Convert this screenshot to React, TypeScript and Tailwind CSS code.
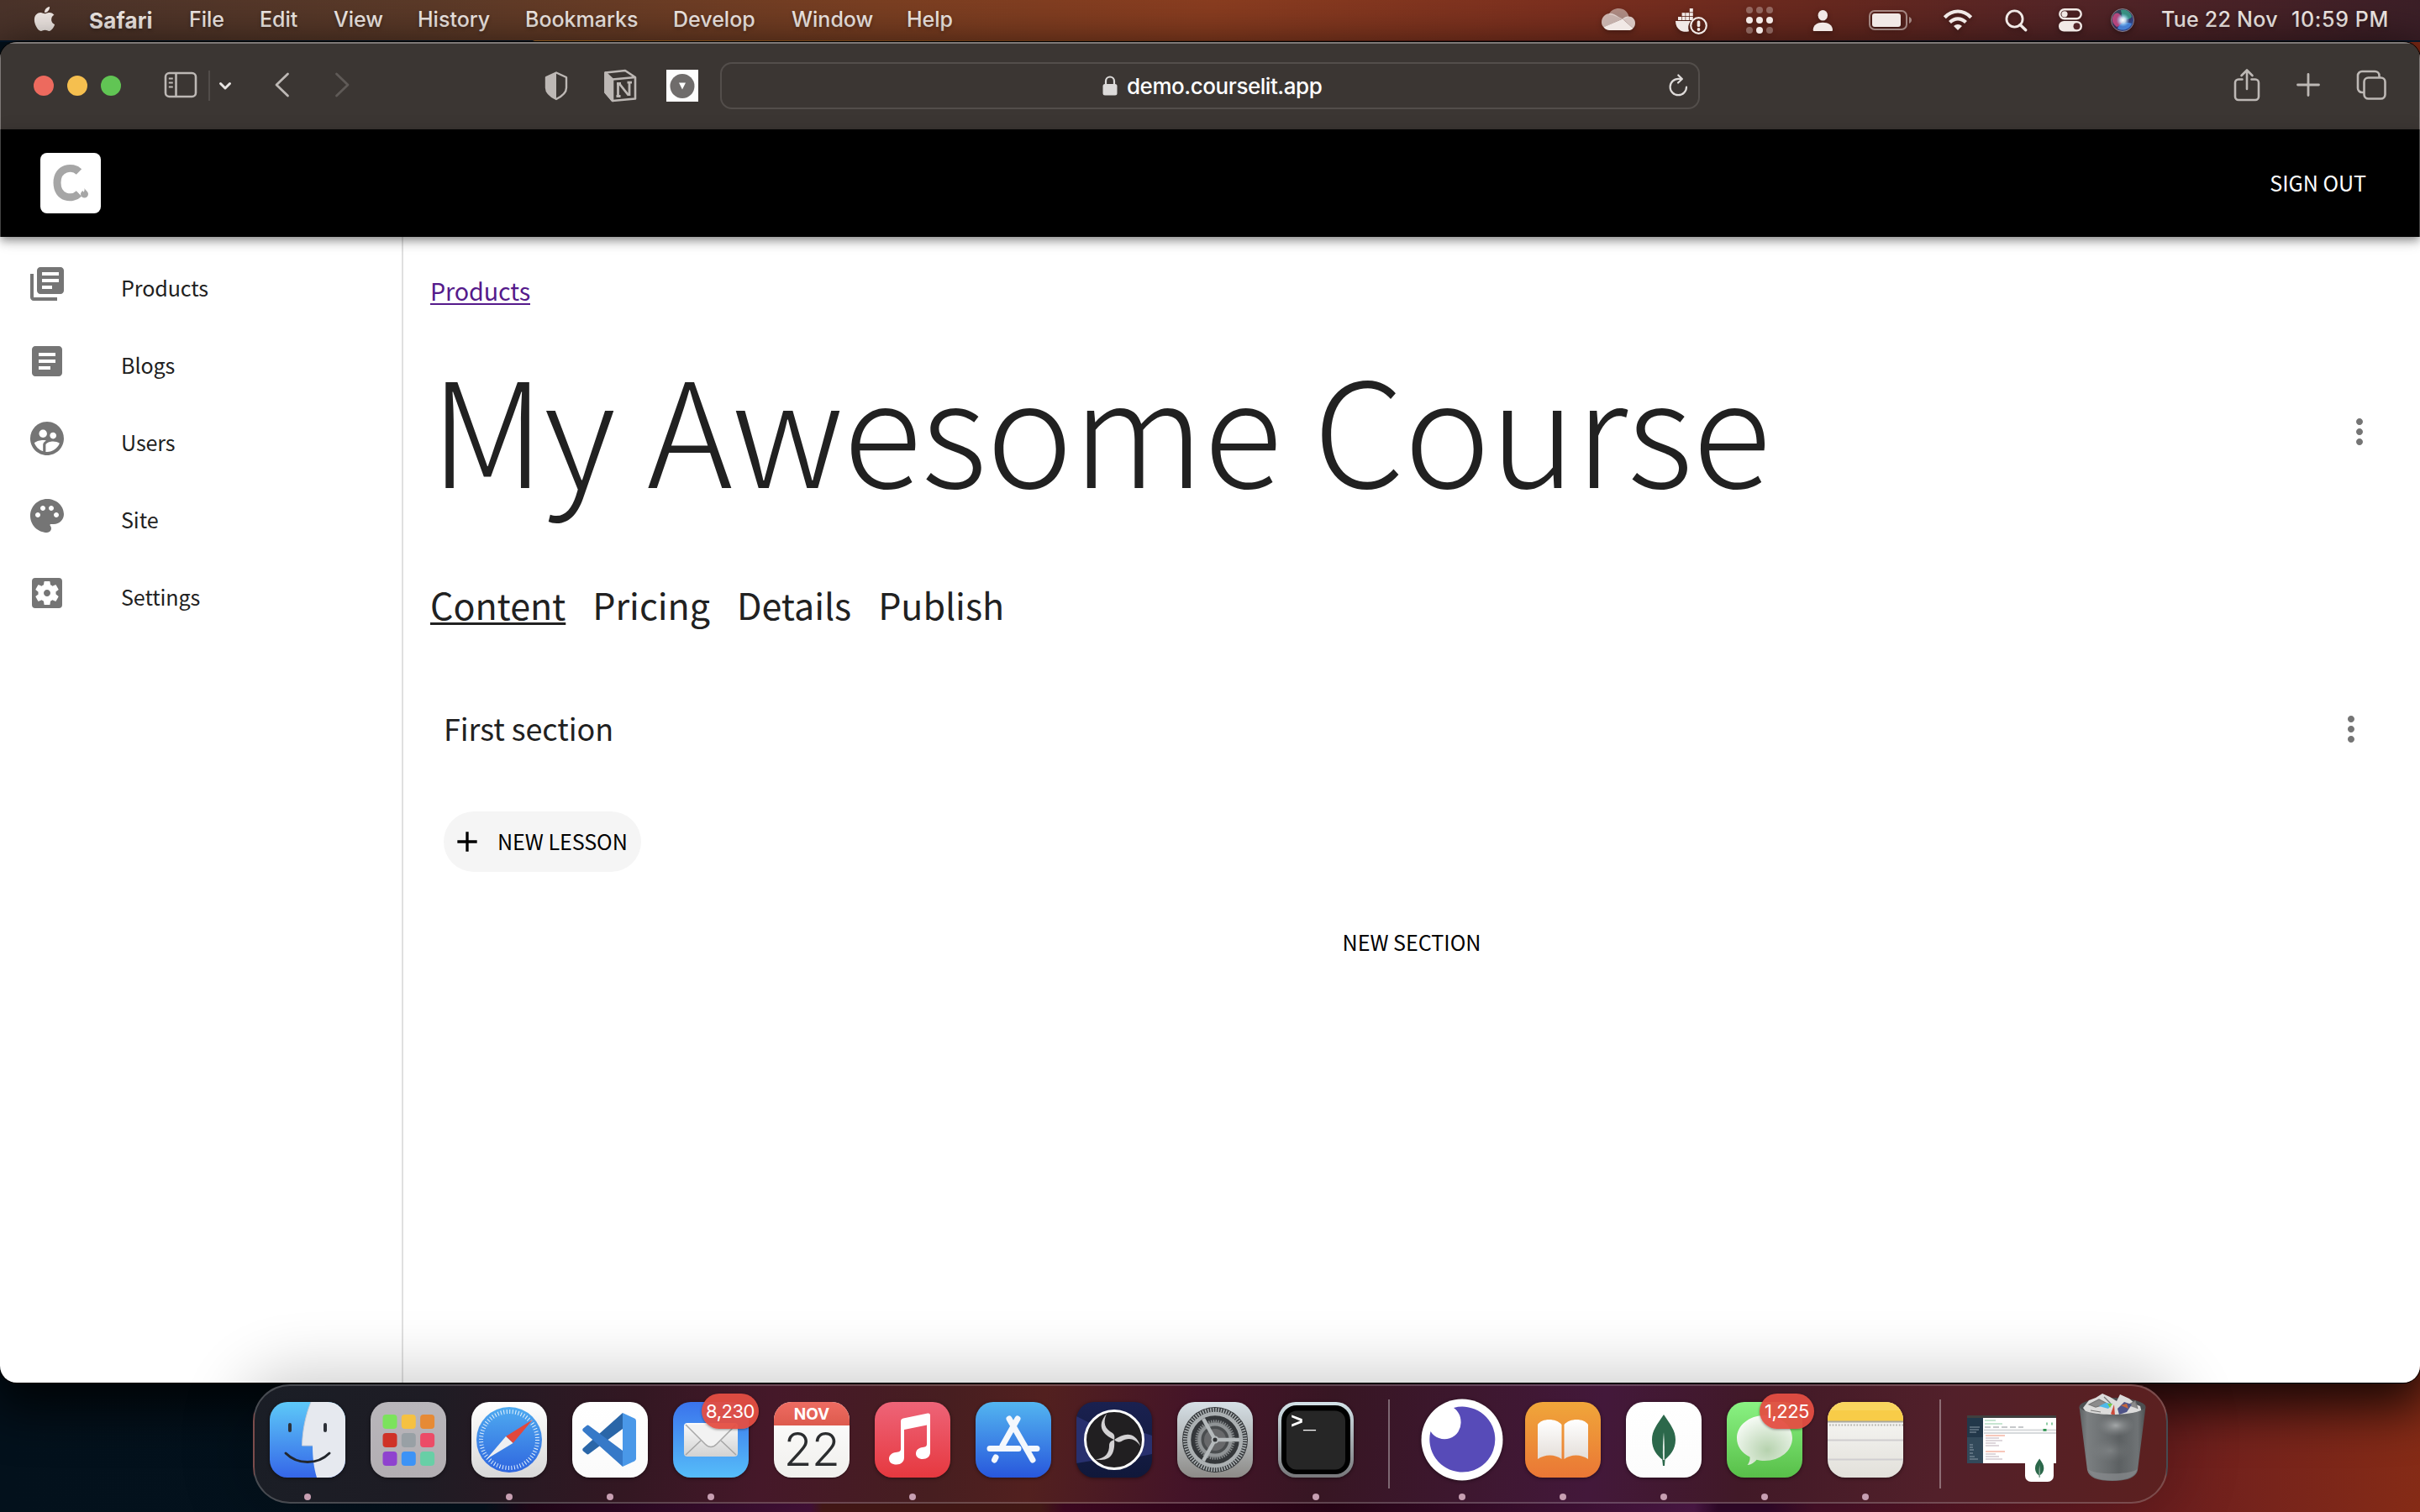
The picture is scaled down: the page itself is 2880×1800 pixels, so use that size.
import React from "react";
import { FaApple } from "react-icons/fa";
import {
  MdAdd,
  MdArticle,
  MdLibraryBooks,
  MdMoreVert,
  MdPalette,
  MdSettingsApplications,
  MdSupervisedUserCircle,
} from "react-icons/md";

const menus = [
  { label: "File", cls: "w-[84px]" },
  { label: "Edit", cls: "w-[88px]" },
  { label: "View", cls: "w-[100px]" },
  { label: "History", cls: "w-[128px]" },
  { label: "Bookmarks", cls: "w-[176px]" },
  { label: "Develop", cls: "w-[141px]" },
  { label: "Window", cls: "w-[137px]" },
  { label: "Help", cls: "w-[80px]" },
];

function StatusIcons() {
  return (
    <div className="flex h-12 items-center drop-shadow-[0_2px_3px_rgba(0,0,0,0.35)]">
      <svg className="h-12 w-10" viewBox="0 0 40 48" fill="#f1e9e6">
        <path opacity=".5" d="M8.500 17C11 12.500 15.500 10 20.500 10c6 0 11 4 12 10l-7 3-12-5z" />
        <path opacity=".72" d="M10 16c4 0 7 2 10 4l5 2.500L2.500 32.500C.5 30.500 0 28.500 0 26.500 0 20.500 4.500 16 10 16z" />
        <path opacity=".82" d="M25 22.500c2-2 4.500-3 7-3 4.500 0 8 3.500 8 8 0 2.500-.8 4.500-2.500 6.200z" />
        <path d="M25 22.500l12.500 11.200C36.200 35.200 34.500 36 32 36H9.500C6.500 36 4 34.700 2.500 32.200z" />
      </svg>
      <svg className="ml-[47px] h-12 w-10" viewBox="0 0 40 48" fill="#f1e9e6">
        <path d="M1 25h18a13 13 0 0 0-2 12.200C14 38 10 38 7 36.500 3 34 1 30 1 25z" />
        <g>
          <rect x="4" y="20" width="4" height="4" />
          <rect x="8.600" y="20" width="4" height="4" />
          <rect x="13.200" y="20" width="4" height="4" />
          <rect x="17.800" y="20" width="4" height="4" />
          <rect x="8.600" y="15.200" width="4" height="4" />
          <rect x="13.200" y="15.200" width="4" height="4" />
          <rect x="17.800" y="15.200" width="4" height="4" />
          <rect x="17.800" y="10" width="4" height="4.400" />
        </g>
        <circle cx="28.500" cy="30.500" r="9.300" fill="none" stroke="#f1e9e6" strokeWidth="2.200" />
        <rect x="26.700" y="24.500" width="3.600" height="7.500" rx="1.500" />
        <circle cx="28.500" cy="35" r="1.900" />
      </svg>
      <svg className="ml-[45px] h-12 w-8" viewBox="0 0 32 48" fill="#f3e9e6">
        <g opacity=".33">
          <circle cx="4" cy="12" r="4" /><circle cx="16" cy="12" r="4" /><circle cx="28" cy="12" r="4" />
          <circle cx="4" cy="36" r="4" /><circle cx="28" cy="36" r="4" />
        </g>
        <circle cx="4" cy="24" r="4" /><circle cx="16" cy="24" r="4" /><circle cx="28" cy="24" r="4" />
        <circle cx="16" cy="36" r="4" />
      </svg>
      <svg className="ml-[47px] h-12 w-6" viewBox="0 0 24 48" fill="#f1e9e6">
        <ellipse cx="12.300" cy="18.300" rx="5.700" ry="6.300" />
        <path d="M.7 35.500C1 30 5.500 26.700 12.200 26.700S23.700 30 24 35.500c0 1-.5 1.500-1.300 1.500H2C1.200 37 .7 36.500.7 35.500z" />
      </svg>
      <svg className="ml-[43px] h-12 w-[52px]" viewBox="0 0 52 48">
        <rect x="1" y="13" width="44" height="22" rx="6" fill="none" stroke="#f1e9e6" strokeOpacity=".5" strokeWidth="2" />
        <rect x="4" y="16" width="34" height="16" rx="3" fill="#f1e9e6" />
        <path d="M48 20c1.800.8 3 2.200 3 4s-1.200 3.200-3 4z" fill="#f1e9e6" fillOpacity=".5" />
      </svg>
      <svg className="ml-9 h-12 w-9" viewBox="0 0 36 48" fill="none" stroke="#f1e9e6" strokeWidth="4.200">
        <path d="M2.300 20.700c9.200-9.600 22.200-9.600 31.400 0" />
        <path d="M8.500 26.500c5.700-5.600 13.300-5.600 19 0" />
        <path d="M18 36l-5-5c3-2.700 7-2.700 10 0z" fill="#f1e9e6" stroke="none" />
      </svg>
      <svg className="ml-[38px] h-12 w-[27px]" viewBox="0 0 27 48" fill="none" stroke="#f1e9e6" strokeWidth="2.800">
        <circle cx="11.500" cy="22.500" r="9.600" />
        <path d="M18.200 29.500l6.500 6.300" strokeWidth="3.400" strokeLinecap="round" />
      </svg>
      <svg className="ml-[37px] h-12 w-7" viewBox="0 0 28 48">
        <rect x="1.300" y="11.300" width="25.400" height="11" rx="5.500" fill="none" stroke="#f1e9e6" strokeWidth="2.400" />
        <circle cx="7" cy="16.800" r="3.600" fill="#f1e9e6" />
        <rect x="0" y="25" width="28" height="12.500" rx="6.200" fill="#f1e9e6" />
        <circle cx="21.500" cy="31.200" r="4" fill="#55262a" />
      </svg>
      <svg className="ml-[34px] h-12 w-7" viewBox="0 0 28 48">
        <defs>
          <linearGradient id="siriBase" x1="0" y1="0" x2="1" y2="1">
            <stop offset="0" stopColor="#2f5a5e" />
            <stop offset=".5" stopColor="#372a55" />
            <stop offset="1" stopColor="#2a5fb5" />
          </linearGradient>
          <radialGradient id="siriGlow">
            <stop offset="0" stopColor="#fff" />
            <stop offset=".4" stopColor="#d5efff" stopOpacity=".85" />
            <stop offset="1" stopColor="#7fd0ff" stopOpacity="0" />
          </radialGradient>
        </defs>
        <circle cx="14" cy="24" r="13.500" fill="url(#siriBase)" stroke="#8b7c86" strokeWidth="1" />
        <path d="M2 21c3-8 9-7 12 2 1 4-3 8-7 9-4-3-6-7-5-11z" fill="#d34a86" opacity=".8" />
        <path d="M12 12c6-2 12 2 13 8-3 4-8 4-11 2z" fill="#3aa68c" opacity=".8" />
        <path d="M8 34c2-6 8-9 17-6-2 6-10 10-17 6z" fill="#4a8fe8" opacity=".8" />
        <circle cx="14.500" cy="24" r="8" fill="url(#siriGlow)" />
      </svg>
    </div>
  );
}

function MenuBar() {
  return (
    <div className="flex h-12 shrink-0 items-center bg-[linear-gradient(100deg,#4a332a_0%,#5c3a28_18%,#7a3f22_36%,#8a3d20_50%,#7d301f_64%,#66281f_76%,#552527_85%,#3b1f27_100%)] pl-[39px] text-[25px] font-medium text-[#f3ebe7] [text-shadow:0_2px_4px_rgba(0,0,0,0.3)]">
      <FaApple className="mb-1 h-[33px] w-[28px]" />
      <span className="ml-[39px] w-[118px] text-[26px] font-bold tracking-[0.15px]">Safari</span>
      {menus.map((m) => (
        <span key={m.label} className={`${m.cls} pl-px whitespace-nowrap`}>
          {m.label}
        </span>
      ))}
      <div className="ml-auto flex items-center">
        <StatusIcons />
        <span className="ml-[32px] w-[155px] tracking-[0.25px] whitespace-nowrap">Tue 22 Nov</span>
        <span className="w-[153px] tracking-[0.65px] whitespace-nowrap">10:59 PM</span>
      </div>
    </div>
  );
}

function BrowserToolbar() {
  return (
    <div className="flex h-[104px] shrink-0 items-center border-t-2 border-[#7e7977] bg-[#3b3633] pb-[2px] pl-[40px] text-[#bdb8b5] shadow-[inset_1px_0_0_#7e7977,inset_-1px_0_0_#7e7977]">
      <div className="flex gap-4">
        <span className="h-6 w-6 rounded-full bg-[#ed6a5e]" />
        <span className="h-6 w-6 rounded-full bg-[#f5bf4f]" />
        <span className="h-6 w-6 rounded-full bg-[#61c554]" />
      </div>
      <svg className="mb-[2px] ml-[51px] h-8 w-10" viewBox="0 0 40 32" fill="none" stroke="currentColor" strokeWidth="2.600">
        <rect x="2" y="2" width="36" height="28" rx="4.500" />
        <path d="M14.500 2v28" />
        <path d="M5.800 8.500h5M5.800 13.500h5M5.800 18.500h5" strokeWidth="2" />
      </svg>
      <span className="ml-[13px] h-9 w-[2px] bg-[#524d4a]" />
      <svg className="ml-[10px] h-4 w-4" viewBox="0 0 16 16" fill="none" stroke="#e8e5e3" strokeWidth="3" strokeLinecap="round" strokeLinejoin="round">
        <path d="M2.500 5.500L8 11l5.500-5.500" />
      </svg>
      <svg className="mb-[2px] ml-[50px] h-8 w-5" viewBox="0 0 20 32" fill="none" stroke="currentColor" strokeWidth="2.800" strokeLinecap="round" strokeLinejoin="round">
        <path d="M16.500 3L3 16l13.500 13" />
      </svg>
      <svg className="mb-[2px] ml-[51px] h-8 w-5" viewBox="0 0 20 32" fill="none" stroke="#5f5a57" strokeWidth="2.800" strokeLinecap="round" strokeLinejoin="round">
        <path d="M3.500 3L17 16 3.500 29" />
      </svg>
      <svg className="ml-[230px] h-9 w-[30px]" viewBox="0 0 30 36">
        <path d="M15 2.500L27 8v12.500c0 6-5 10-12 13.500C8 30.500 3 26.500 3 20.500V8z" fill="none" stroke="currentColor" strokeWidth="2.400" strokeLinejoin="round" />
        <path d="M15 2.500V34C8 30.500 3 26.500 3 20.500V8z" fill="currentColor" />
      </svg>
      <svg className="ml-[41px] h-10 w-10" viewBox="0 0 40 40" fill="none" stroke="currentColor" strokeWidth="2.600" strokeLinejoin="round">
        <path d="M2.500 4.500L26 2l12 8v25.500L11 38 2.500 28z" />
        <path d="M2.500 4.500L11 12.500V38L2.500 28z" fill="currentColor" />
        <path d="M11 12.500l27-2.500" />
        <path d="M16 17.500h5M17.500 17.500v14.500M15.500 32.500h5M19 17.500l11 14M31 16v16M28.500 16.200h5.500" strokeWidth="2.800" />
      </svg>
      <svg className="ml-[35px] h-[38px] w-[38px]" viewBox="0 0 38 38">
        <rect width="38" height="38" fill="#fdfdfd" />
        <circle cx="19" cy="19.500" r="14.500" fill="#6f6c6b" />
        <path d="M15 15.500h8l-4 8z" fill="#fff" />
      </svg>
      <div className="ml-[26px] flex h-[56px] w-[1166px] items-center rounded-[14px] border-2 border-[#534e4b] pr-3 text-white">
        <svg className="ml-[452px] h-6 w-5" viewBox="0 0 20 24">
          <path d="M5 11V6.500a5 5 0 0 1 10 0V11" fill="none" stroke="#dcdad9" strokeWidth="2.200" />
          <rect x="1.500" y="10" width="17" height="13.500" rx="2.500" fill="#dcdad9" />
        </svg>
        <span className="ml-[10px] text-[26px] font-medium tracking-[-0.45px] whitespace-nowrap">demo.courselit.app</span>
        <svg className="ml-auto h-7 w-6" viewBox="0 0 24 28" fill="none" stroke="#dedbd9" strokeWidth="2.200" strokeLinecap="round" strokeLinejoin="round">
          <path d="M22 15.500a9.700 9.700 0 1 1-9.700-9.700h4" />
          <path d="M12.300 1.500l4.500 4.500-4.700 4.500" />
        </svg>
      </div>
      <svg className="mb-[3px] ml-[635px] h-10 w-8" viewBox="0 0 32 40" fill="none" stroke="currentColor" strokeWidth="2.600" strokeLinecap="round" strokeLinejoin="round">
        <path d="M10.500 13.500H6a4 4 0 0 0-4 4V34a4 4 0 0 0 4 4h20a4 4 0 0 0 4-4V17.500a4 4 0 0 0-4-4h-4.500" />
        <path d="M16 25V3M9.500 9L16 2.500 22.500 9" />
      </svg>
      <svg className="mb-[2px] ml-[43px] h-7 w-7" viewBox="0 0 28 28" fill="none" stroke="currentColor" strokeWidth="2.800" strokeLinecap="round">
        <path d="M14 1.500v25M1.500 14h25" />
      </svg>
      <svg className="mb-[2px] ml-[43px] h-9 w-9" viewBox="0 0 36 36" fill="none" stroke="currentColor" strokeWidth="2.600">
        <rect x="9.500" y="9.500" width="25" height="25" rx="5" />
        <path d="M9.500 27H7a5 5 0 0 1-5-5V7a5 5 0 0 1 5-5h15.500a5 5 0 0 1 5 5v2.500" />
      </svg>
    </div>
  );
}

const nav = [
  { label: "Products", Icon: MdLibraryBooks },
  { label: "Blogs", Icon: MdArticle },
  { label: "Users", Icon: MdSupervisedUserCircle },
  { label: "Site", Icon: MdPalette },
  { label: "Settings", Icon: MdSettingsApplications },
];

function CoursePage() {
  return (
    <div className="flex min-h-0 flex-1 flex-col bg-white font-['Noto_Sans_CJK_SC','Noto_Sans',sans-serif] text-[#212121]">
      <header className="z-10 flex h-32 shrink-0 items-center justify-between border-x border-[#444] bg-black pr-[63px] pl-[47px] shadow-[0_4px_8px_-2px_rgba(0,0,0,0.3),0_8px_10px_rgba(0,0,0,0.16),0_2px_20px_rgba(0,0,0,0.12)]">
        <svg className="h-[72px] w-[72px] rounded-[8px] bg-white" viewBox="0 0 72 72">
          <path d="M46 22.500C38.500 15 20 17 20 35.500c0 19 18.500 20.500 26 13" fill="none" stroke="#a6a6a6" strokeWidth="9" />
          <path d="M52.500 42c1.500 3 4.500 4 4.500 7a4.500 4.500 0 0 1-9 0c0-2 1.500-2.500 2-4 1 .6 1.300 1.200 1.600 1.800.9-1.400 1.200-3 .9-4.800z" fill="#a6a6a6" />
        </svg>
        <span className="text-[25.1px] tracking-[-0.05px] whitespace-nowrap text-white">SIGN OUT</span>
      </header>
      <div className="flex min-h-0 flex-1">
        <nav className="w-[480px] shrink-0 border-r-2 border-[#e0e0e0] pt-[14px]">
          {nav.map(({ label, Icon }) => (
            <div key={label} className="flex h-[92px] items-center pl-8">
              <Icon className="mb-2 h-12 w-12 text-[#757575]" />
              <span className="mt-px ml-[64px] text-[25.1px] tracking-[-0.1px]">{label}</span>
            </div>
          ))}
        </nav>
        <main className="flex min-w-0 flex-1 flex-col pt-[44px] pl-[32px]">
          <a className="h-10 self-start text-[28.7px] leading-10 tracking-[-0.1px] text-[#551a8b] underline decoration-2 underline-offset-[3px]">
            Products
          </a>
          <div className="mt-[29px] flex h-[224px] items-center justify-between pr-[48px]">
            <h1 className="mb-[2px] text-[173px] leading-[224px] font-light tracking-[-0.4px] whitespace-nowrap">My Awesome Course</h1>
            <MdMoreVert className="mt-[14px] h-12 w-12 text-[#757575]" />
          </div>
          <div className="mt-[68px] flex h-16 gap-8 text-[43px] leading-[64px] tracking-[-0.04px]">
            <span className="underline decoration-[3px] underline-offset-[3px]">Content</span>
            <span>Pricing</span>
            <span>Details</span>
            <span>Publish</span>
          </div>
          <div className="mt-[83px] flex h-16 items-center justify-between pr-[58px] pl-4">
            <span className="text-[35.900px] leading-[64px] tracking-[-0.05px]">First section</span>
            <MdMoreVert className="mt-1 h-12 w-12 text-[#757575]" />
          </div>
          <button className="mt-[68px] ml-4 flex h-[72px] w-[235px] items-center rounded-full bg-[#f5f5f5] pl-2 text-black">
            <MdAdd className="h-10 w-10" />
            <span className="ml-4 text-[25.1px] tracking-[-0.05px] whitespace-nowrap">NEW LESSON</span>
          </button>
          <div className="mt-[51px] -ml-8 text-center text-[25.1px] leading-[64px] text-black">NEW SECTION</div>
        </main>
      </div>
    </div>
  );
}

function Leaf() {
  return (
    <g>
      <path d="M45 15c8 12 14 19 14 30 0 12-7 19-12.500 23.500L46 76h-2l-.8-7.500C37.500 64 31 57 31 45c0-11 6-18 14-30z" fill="#2c684b" />
      <path d="M45 36c1 12 1 22 .8 33h-1.600C43.500 58 44 46 45 36z" fill="#dfe9e3" />
    </g>
  );
}

function Tile({ id, from, to }: { id: string; from: string; to: string }) {
  return (
    <>
      <defs>
        <linearGradient id={id} x1="0" y1="0" x2="0" y2="1">
          <stop offset="0" stopColor={from} />
          <stop offset="1" stopColor={to} />
        </linearGradient>
        <clipPath id={`${id}-clip`}>
          <rect width="90" height="90" rx="21" />
        </clipPath>
      </defs>
      <rect width="90" height="90" rx="21" fill={`url(#${id})`} />
    </>
  );
}

function FinderIcon() {
  return (
    <>
      <Tile id="finder" from="#5dc9f8" to="#3566e8" />
      <g clipPath="url(#finder-clip)">
        <path d="M49 0C43 15 39 33 38.500 52H51c0 14 1.500 26 5 38h34V0z" fill="#e6e9ef" />
        <path d="M49 0C43 15 39 33 38.500 52H51" fill="none" stroke="#c8ccd5" strokeWidth="1" />
      </g>
      <path d="M24 27v7M66 27v7" stroke="#2d3138" strokeWidth="4" strokeLinecap="round" />
      <path d="M19 61c14 14 38 14 52 0" fill="none" stroke="#22262c" strokeWidth="3" strokeLinecap="round" />
    </>
  );
}

const padColors = ["#7be35c", "#f5c142", "#e68a35", "#cf3226", "#98a0a5", "#ec4c67", "#8f42cf", "#3d93f6", "#68cfa6"];

function LaunchpadIcon() {
  return (
    <>
      <Tile id="pad" from="#b9b6bb" to="#b2aeb2" />
      {padColors.map((c, i) => (
        <rect key={c} x={14.500 + (i % 3) * 22.300} y={15 + Math.floor(i / 3) * 22} width="17" height="17" rx="4" fill={c} />
      ))}
    </>
  );
}

function SafariIcon() {
  return (
    <>
      <Tile id="safari" from="#ffffff" to="#d8d8d8" />
      <defs>
        <linearGradient id="dial" x1="0" y1="0" x2="0" y2="1">
          <stop offset="0" stopColor="#4fabf0" />
          <stop offset="1" stopColor="#2f66df" />
        </linearGradient>
      </defs>
      <circle cx="45" cy="45" r="39" fill="url(#dial)" />
      <circle cx="45" cy="45" r="33.500" fill="none" stroke="#e3f0fc" strokeWidth="5" strokeDasharray="1 2.508" />
      <path d="M73 21L49.500 49 41 41z" fill="#e2483c" />
      <path d="M18 68l23-27 8.500 8z" fill="#eef0f2" />
    </>
  );
}

function CodeIcon() {
  return (
    <>
      <Tile id="code" from="#ffffff" to="#fbfbfb" />
      <path d="M60 13L13 55c-1 1-1 2.500 0 3.500l4 3.300c1 .8 2 .8 3 0L60 32z" fill="#2a66a8" />
      <path d="M60 77L13 35c-1-1-1-2.500 0-3.500l4-3.300c1-.8 2-.8 3 0L60 58z" fill="#3679c8" />
      <path d="M60 13l14 6.500c1.300.7 2 1.800 2 3.200v44.600c0 1.400-.7 2.500-2 3.200L60 77z" fill="#4a98e8" />
    </>
  );
}

function MailIcon() {
  return (
    <>
      <Tile id="mail" from="#3a73ec" to="#56bdf9" />
      <defs>
        <linearGradient id="env" x1="0" y1="0" x2="0" y2="1">
          <stop offset="0" stopColor="#fbfbfb" />
          <stop offset="1" stopColor="#d2d2d2" />
        </linearGradient>
      </defs>
      <rect x="13" y="25" width="64" height="40" rx="4" fill="url(#env)" />
      <path d="M15 63l18-17M75 63L57 46" stroke="#a5a5a5" strokeWidth="1.500" />
      <path d="M15 27l23 23c4 4.500 10 4.500 14 0l23-23" fill="#f2f2f2" stroke="#a8a8a8" strokeWidth="1.500" />
    </>
  );
}

function MusicIcon() {
  return (
    <>
      <Tile id="music" from="#ee6478" to="#e6383f" />
      <path d="M31 23c0-2 1-3 3-3.500L63 13.500c2-.4 3 .6 3 2.500v44c0 5-4 8-9 8-4.500 0-8-2.500-8-6.500 0-4.500 3.500-7 8-7.500 4-.5 5-1.500 5-4V27.500L35 33v33c0 5.500-4 8.500-9 8.500-5.500 0-9-2.500-9-7 0-4 3.500-7 8-7.500s6-1.500 6-4z" fill="#fff" />
    </>
  );
}

function StoreIcon() {
  return (
    <>
      <Tile id="store" from="#53b5f0" to="#2857dc" />
      <g stroke="#f4f8fd" strokeWidth="7" strokeLinecap="round">
        <path d="M40 20l28 49" />
        <path d="M50 20L32 52" />
        <path d="M24 66l-1.500 3" />
        <path d="M17 55.500h34M64 55.500h9" />
      </g>
    </>
  );
}

function ObsIcon() {
  return (
    <>
      <Tile id="obs" from="#1a2150" to="#10183a" />
      <g clipPath="url(#obs-clip)">
        <path d="M0 17l30 15v36L0 73zM60 30l30 10v22L60 68z" fill="#28306e" />
      </g>
      <circle cx="45" cy="45" r="34.500" fill="#211f21" stroke="#fff" strokeWidth="3" />
      {[0, 120, 240].map((a) => (
        <path key={a} transform={`rotate(${a} 45 45)`} d="M45 45C32 39 23 29 36 14c-5 11-2 18 7 23 2 1.500 3 4 2 8z" fill="#d3d1d3" />
      ))}
    </>
  );
}

function SettingsIcon() {
  return (
    <>
      <Tile id="settings" from="#d6e0e6" to="#8d8b88" />
      <circle cx="45" cy="45" r="39" fill="#34373a" />
      <circle cx="45" cy="45" r="35.500" fill="none" stroke="#aab0b2" strokeWidth="5" strokeDasharray="1.600 1.500" />
      <circle cx="45" cy="45" r="31" fill="none" stroke="#abb0b2" strokeWidth="4.500" />
      <circle cx="45" cy="45" r="22" fill="#5a5d5f" stroke="#868a8c" strokeWidth="3.500" strokeDasharray="1.400 1.400" />
      <circle cx="45" cy="45" r="18.500" fill="#4a4d4f" stroke="#909496" strokeWidth="4" />
      <circle cx="45" cy="45" r="13" fill="#68696b" />
      <g stroke="#b5babc" strokeWidth="4.500">
        <path d="M45 45h29M45 45L31 20M45 45L31 70" />
      </g>
      <circle cx="45" cy="45" r="3.500" fill="#303234" stroke="#b5babc" strokeWidth="2" />
    </>
  );
}

function TerminalIcon() {
  return (
    <>
      <Tile id="term" from="#d3e2e8" to="#77777a" />
      <rect x="4" y="4" width="82" height="82" rx="18" fill="#000" />
      <rect x="10" y="10.500" width="70" height="70" rx="12" fill="#262626" />
      <text x="15" y="31" fill="#fff" fontSize="25" fontWeight="700" fontFamily="Liberation Mono, monospace">
        &gt;_
      </text>
    </>
  );
}

function InsomniaIcon() {
  return (
    <>
      <circle cx="45" cy="45" r="48.500" fill="#fff" />
      <path d="M35 7A39 39 0 1 1 7.500 35a19.500 19.500 0 0 0 36-12c0-6-3-12-8.500-16z" fill="#574bb8" />
    </>
  );
}

function BooksIcon() {
  return (
    <>
      <Tile id="books" from="#f0a63a" to="#ea7735" />
      <defs>
        <linearGradient id="pages" x1="0" y1="0" x2="0" y2="1">
          <stop offset="0" stopColor="#fff" />
          <stop offset="1" stopColor="#e4ded9" />
        </linearGradient>
      </defs>
      <path d="M15 27c5-8 22-8 28.500 0v41c-8-6-20-6-28.500 0z" fill="url(#pages)" />
      <path d="M75 27c-5-8-22-8-28.500 0v41c8-6 20-6 28.500 0z" fill="url(#pages)" />
    </>
  );
}

function MongoIcon() {
  return (
    <>
      <Tile id="mongo" from="#ffffff" to="#fcfcfc" />
      <Leaf />
    </>
  );
}

function MessagesIcon() {
  return (
    <>
      <Tile id="msg" from="#8af283" to="#58bf49" />
      <defs>
        <radialGradient id="bubble" cx=".55" cy=".7" r=".7">
          <stop offset="0" stopColor="#b6d2ae" />
          <stop offset="1" stopColor="#f6fbf5" />
        </radialGradient>
      </defs>
      <path d="M45 16c18.500 0 33 12 33 27S63.500 70 45 70c-3.500 0-6.500-.4-9.500-1.200C33 72 29 75 24.500 75c2-2 3.500-6 3-9.500C17.500 60.500 12 52.500 12 43c0-15 14.500-27 33-27z" fill="url(#bubble)" />
    </>
  );
}

function NotesIcon() {
  return (
    <>
      <Tile id="notes" from="#fafaf8" to="#e2e0da" />
      <g clipPath="url(#notes-clip)">
        <rect width="90" height="23" fill="#f8cc48" />
        <rect width="90" height="10" fill="#fad968" opacity=".7" />
        <rect y="22.500" width="90" height="2" fill="#a9a79d" />
        <path d="M2 27.500h88" stroke="#b5b3ae" strokeWidth="1.800" strokeDasharray="1.800 1.800" />
        <path d="M0 45.500h90M0 68.500h90" stroke="#d0ced0" strokeWidth="1.800" />
      </g>
    </>
  );
}

function DockApp({ children, running, badge, wide }: { children?: React.ReactNode; running?: boolean; badge?: string; wide?: boolean }) {
  return (
    <div className="relative flex w-[90px] shrink-0 flex-col items-center">
      <svg className="h-[90px] w-[90px] overflow-visible drop-shadow-[0_1px_2px_rgba(0,0,0,0.45)]" viewBox="0 0 90 90">
        {children}
      </svg>
      {running && <span className="mt-[19px] h-2 w-2 rounded-full bg-[#c79fb2]" />}
      {badge && (
        <span
          className={`absolute -top-[10px] flex h-[42px] items-center justify-center rounded-full bg-[#e44e42]/95 text-[22px] tracking-[-0.5px] text-white shadow-[0_1px_3px_rgba(0,0,0,0.4)] ${wide ? "left-[34px] w-[68px]" : "left-[39px] w-[65px]"}`}
        >
          {badge}
        </span>
      )}
    </div>
  );
}

function CalendarApp() {
  return (
    <div className="flex h-[90px] w-[90px] shrink-0 flex-col items-center overflow-hidden rounded-[21px] bg-gradient-to-b from-white to-[#f0efec] shadow-[0_1px_2px_rgba(0,0,0,0.45)]">
      <div className="flex h-[28px] w-full shrink-0 items-center justify-center bg-gradient-to-b from-[#ee6c62] to-[#dd5a4d] pt-[3px] text-[19px] font-bold text-white">
        NOV
      </div>
      <div className="-mt-px text-[55px] leading-[58px] font-light tracking-[-0.5px] text-[#2b2d2f]">22</div>
    </div>
  );
}

function MinimizedWindow() {
  const rows = [26, 29, 32, 35, 38, 45, 48, 51, 54];
  return (
    <svg className="mt-[16px] ml-[31px] h-[80px] w-[106px] shrink-0" viewBox="0 0 106 80">
      <rect width="106" height="57" fill="#fff" />
      <rect width="106" height="3" fill="#3f403f" />
      <rect y="3" width="19" height="54" fill="#32495a" />
      <rect y="3" width="19" height="23" fill="#22384a" />
      <path d="M3 14h12M3 17h11M3 20h8M3 35h4M3 38h4M3 41h5M3 45h4M3 49h6M3 52h10" stroke="#8a9aa6" strokeWidth="1" />
      <path d="M21 6h13M21 10h21" stroke="#8fcda5" strokeWidth="1.200" />
      <path d="M21 14h46" stroke="#8c9196" strokeWidth="1" strokeDasharray="7 3" />
      <path d="M20 17.500h86M20 21h86" stroke="#d7dadc" strokeWidth="2" />
      <rect x="90.500" y="16" width="4" height="2.800" fill="#2f9550" />
      <path d="M95 8.500v3M101 8.500v3" stroke="#8fcda5" strokeWidth="2" />
      {rows.map((y, i) => (
        <path key={y} d={i % 5 === 0 ? `M22 ${y - 2}h23` : `M22 ${y - 2}h${12 + (i % 3) * 4}`} stroke={i % 5 === 0 ? "#f19a82" : "#c3b6c0"} strokeWidth="1.100" />
      ))}
      <rect x="69" y="47" width="34" height="32" rx="7" fill="#fff" />
      <g transform="translate(69.500 46) scale(.37)">
        <Leaf />
      </g>
    </svg>
  );
}

function Trash() {
  return (
    <svg className="-mt-[10px] ml-[27px] h-[106px] w-[80px] shrink-0" viewBox="0 0 80 106">
      <defs>
        <linearGradient id="bin" x1="0" y1="0" x2="1" y2="0">
          <stop offset="0" stopColor="#5d6163" />
          <stop offset=".12" stopColor="#7b7f81" />
          <stop offset=".45" stopColor="#686c6e" />
          <stop offset=".6" stopColor="#5c6062" />
          <stop offset=".88" stopColor="#6f7375" />
          <stop offset="1" stopColor="#4c4f51" />
        </linearGradient>
        <radialGradient id="sheen">
          <stop offset="0" stopColor="#b5b8b9" stopOpacity=".8" />
          <stop offset="1" stopColor="#8a8d8f" stopOpacity="0" />
        </radialGradient>
      </defs>
      <ellipse cx="40" cy="16" rx="39.500" ry="11" fill="#4c4f51" />
      <path d="M5 17L12 8l8-3 8-5 9 4 8 5 4-8 11 5 8 7 5 2 2 8-8 7H14z" fill="#dcdcdb" />
      <path d="M12 13l12-6 10 5-14 4zM30 4l8 8M58 14l9-5 3 9M14 20l12 2" fill="#8c8c8c" stroke="#777" strokeWidth="1.200" />
      <path d="M24 15l8-4 8 1-5 6z" fill="#4cb9ea" />
      <path d="M34 12l6 0-3 5z" fill="#77cc44" />
      <path d="M46 18l8-8 9 3-6 9-9 3z" fill="#4f5488" />
      <path d="M50 14l7-2 2 6z" fill="#c4663b" />
      <path d="M38 24l4-11 1 14z" fill="#cc4a3a" />
      <path d="M.5 16c8 12 71 12 79 0L70 91c-2 9-12 13-30 13S12 100 10 91z" fill="url(#bin)" />
      <ellipse cx="44" cy="38" rx="22" ry="13" fill="url(#sheen)" />
      <ellipse cx="38" cy="68" rx="24" ry="14" fill="url(#sheen)" opacity=".35" />
      <path d="M11 90c3 10 14 13.500 29 13.500S67 100 69.500 90C62 97 18 97 11 90z" fill="#898c8e" opacity=".7" />
    </svg>
  );
}

function Dock() {
  return (
    <div className="z-20 mt-[2px] ml-[301px] flex h-[142px] w-[2279px] shrink-0 items-start rounded-[44px] border-2 border-white/20 bg-[linear-gradient(100deg,#1a1e26_0%,#1e1c24_9%,#331722_20%,#451829_27%,#471e20_36%,#52201f_41%,#441428_49%,#371623_56%,#43183a_70%,#411927_78%,#52202a_88%,#5c201f_100%)] pt-[19px] pl-[18px] shadow-[0_0_76px_14px_rgba(0,0,0,0.2)]">
      <div className="flex gap-[30px]">
        <DockApp running><FinderIcon /></DockApp>
        <DockApp><LaunchpadIcon /></DockApp>
        <DockApp running><SafariIcon /></DockApp>
        <DockApp running><CodeIcon /></DockApp>
        <DockApp running badge="8,230" wide><MailIcon /></DockApp>
        <CalendarApp />
        <DockApp running><MusicIcon /></DockApp>
        <DockApp><StoreIcon /></DockApp>
        <DockApp><ObsIcon /></DockApp>
        <DockApp><SettingsIcon /></DockApp>
        <DockApp running><TerminalIcon /></DockApp>
      </div>
      <span className="-mt-[3px] ml-[41px] h-[106px] w-[2px] shrink-0 bg-white/35" />
      <div className="ml-[41px] flex gap-[30px]">
        <DockApp running><InsomniaIcon /></DockApp>
        <DockApp running><BooksIcon /></DockApp>
        <DockApp running><MongoIcon /></DockApp>
        <DockApp running badge="1,225"><MessagesIcon /></DockApp>
        <DockApp running><NotesIcon /></DockApp>
      </div>
      <span className="-mt-[3px] ml-[43px] h-[106px] w-[2px] shrink-0 bg-white/35" />
      <MinimizedWindow />
      <Trash />
    </div>
  );
}

export default function App() {
  return (
    <div className="flex h-[1800px] w-[2880px] flex-col overflow-hidden bg-[linear-gradient(90deg,#03111c_0%,#04121d_20%,#24061a_22%,#48123c_33.500%,#4a1a18_34%,#4a1c18_43%,#430824_44%,#2c0518_55%,#50194a_70%,#33092b_71%,#33092b_73%,#4a112a_75%,#6a1d20_88%,#852b16_100%)] font-['Inter','Liberation_Sans',sans-serif]">
      <MenuBar />
      <div className="h-[2px] shrink-0 bg-[linear-gradient(90deg,#04182c_0%,#04182c_22%,#b0702a_22.100%,#8a4a1c_42%,#5a1a14_60%,#14182c_80%,#0a1a30_100%)]" />
      <div className="flex h-[1596px] shrink-0 flex-col overflow-hidden rounded-[20px] shadow-[0_0_0_1px_#000,0_20px_60px_10px_rgba(0,0,0,0.8)]">
        <BrowserToolbar />
        <CoursePage />
      </div>
      <Dock />
    </div>
  );
}
